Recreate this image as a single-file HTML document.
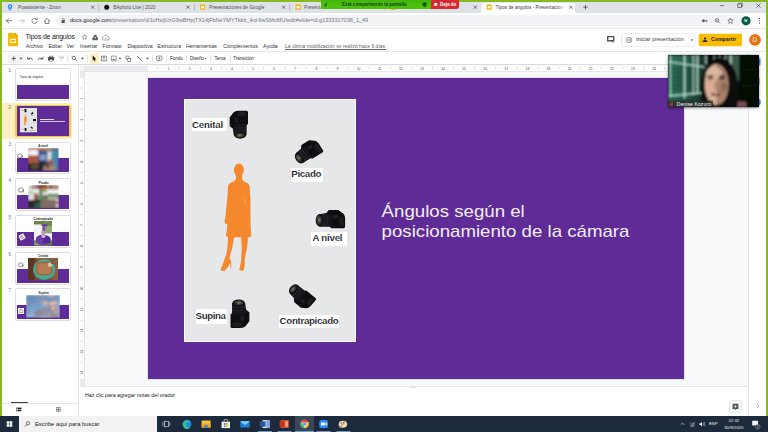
<!DOCTYPE html>
<html><head><meta charset="utf-8">
<style>
*{box-sizing:border-box;margin:0;padding:0}
html,body{width:768px;height:432px;overflow:hidden;background:#fff;font-family:"Liberation Sans",sans-serif}
.a{position:absolute}
.t{position:absolute;white-space:nowrap;line-height:1}
#tabstrip{left:0;top:0;width:768px;height:13.3px;background:#dee1e6}
#addr{left:0;top:13.3px;width:768px;height:15.7px;background:#fff;border-bottom:.5px solid #e4e6e9}
#omni{left:56.3px;top:15px;width:686px;height:11.4px;border-radius:6px;background:#f1f3f4}
#hdr{left:0;top:29px;width:768px;height:22.3px;background:#fff}
#tb{left:0;top:51.3px;width:768px;height:14px;background:#fff;border-top:.6px solid #e3e5e8;border-bottom:.6px solid #dadce0}
#film{left:0;top:65.3px;width:79.2px;height:351px;background:#fff;border-right:.6px solid #e0e2e5}
#canvas{left:79.5px;top:65.3px;width:669px;height:320.5px;background:#f8f9fa}
#notes{left:79.5px;top:385.8px;width:669px;height:30.5px;background:#fff;border-top:.7px solid #e3e5e8}
#side{left:748.3px;top:51.6px;width:18px;height:365px;background:#fff;border-left:.6px solid #e3e5e8}
#slide{left:148px;top:77.5px;width:536px;height:301.5px;background:#5e2b97;box-shadow:0 0 1.5px rgba(0,0,0,.35)}
#pic{left:184px;top:98.6px;width:172.3px;height:243.4px;background:#e6e7e9;border:1px solid #fff}
.lbl{position:absolute;background:#fff;color:#101018;-webkit-text-stroke:.13px #fff;font-weight:bold;font-size:9.7px;line-height:1;white-space:nowrap}
#task{left:0;top:416px;width:768px;height:16px;background:#1c2a3b}
.g{position:absolute;background:#86ba1e}
.menu{top:43.8px;font-size:5.17px;color:#30333a}
.tbt{top:56.6px;font-size:4.5px;color:#26292c}
.sep{position:absolute;top:54.8px;width:.5px;height:7.4px;background:#e0e2e5}
.num{position:absolute;font-size:4.8px;color:#6f757b;line-height:1;left:8.6px}
.th{position:absolute;left:15px;width:55.6px;height:32.6px;border:.6px solid #dcdee2;border-radius:1.6px;background:#fff}
.ts{position:absolute;left:16.8px;width:52.7px;height:29.6px;background:#fff;overflow:hidden}
.tp{position:absolute;left:0;width:100%;bottom:0;background:#5e2b97}
.tt{position:absolute;font-size:3px;font-weight:bold;color:#222;line-height:1;white-space:nowrap;transform:translateX(-50%)}
</style></head><body>
<!-- chrome tab strip -->
<div class="a" id="tabstrip"></div>
<div class="a" id="addr"></div>
<div class="a" id="omni"></div>
<div class="a" id="hdr"></div>
<div class="a" id="tb"></div>
<div class="a" id="film"></div>
<div class="a" id="canvas"></div>
<div class="a" id="notes"></div>
<div class="a" id="side"></div>
<div class="a" id="slide"></div>
<div class="a" id="pic"></div>
<div class="a" id="task"></div>
<!--TABS-->
<!-- tabs -->
<svg class="a" style="left:0;top:0" width="768" height="14" viewBox="0 0 768 14">
<path d="M478.5,13.4 Q481.5,13.4 481.5,10.4 L481.5,5.6 Q481.5,2.8 484.3,2.8 L572.2,2.8 Q575,2.8 575,5.6 L575,10.4 Q575,13.4 578,13.4 Z" fill="#fff"/>
<g stroke="#8a9096" stroke-width=".5"><path d="M98.7,4.6V10.6M194.6,4.6V10.6M289.5,4.6V10.6M385.3,4.6V10.6"/></g>
<!-- favicons -->
<path d="M10,4.3a2.3,2.3 0 0 1 2.3,2.3c0,1.2-.9,1.6-1.1,2.6h-2.4c-.2-1-1.1-1.4-1.1-2.6A2.3,2.3 0 0 1 10,4.3z" fill="#2d8cff"/><rect x="9" y="9.6" width="2" height=".9" fill="#2d8cff"/><circle cx="10" cy="6.5" r=".9" fill="#cfe6ff"/>
<circle cx="106.7" cy="7.2" r="2.5" fill="#0a0a0a"/>
<g id="sl"><rect x="200" y="4.6" width="5.2" height="5.2" rx=".8" fill="#f4b400"/><rect x="201.1" y="6" width="3" height="2.4" fill="#fff"/></g>
<use href="#sl" x="95.6"/><use href="#sl" x="190.800"/><use href="#sl" x="286.6"/>
<!-- close x -->
<g stroke="#3c4043" stroke-width=".7" fill="none"><path d="M91.2,5.7l3,3m0,-3l-3,3M186.5,5.7l3,3m0,-3l-3,3M282.2,5.7l3,3m0,-3l-3,3M473.8,5.7l3,3m0,-3l-3,3M569.3,5.7l3,3m0,-3l-3,3"/>
<path d="M583.3,7.2h4.4M585.5,5v4.4" stroke="#44484d" stroke-width=".8"/>
<path d="M719.8,5.6h4.4" stroke="#333" stroke-width=".6"/><rect x="737.8" y="4" width="3.6" height="3.6" stroke="#333" stroke-width=".6"/><path d="M738.8,4V3.2h3.6V6.6h-1" stroke="#333" stroke-width=".5"/>
<path d="M756.4,3.4l4.2,4.2m0,-4.2l-4.2,4.2" stroke="#333" stroke-width=".6"/></g>
</svg>
<div class="t" style="left:18px;top:5.5px;font-size:4.7px;color:#4a4e54">Posasistente - Zoom</div>
<div class="t" style="left:113.3px;top:5.5px;font-size:4.7px;color:#4a4e54">BAphoto Live | 2020</div>
<div class="t" style="left:209px;top:5.5px;font-size:4.7px;color:#4a4e54">Presentaciones de Google</div>
<div class="t" style="left:304px;top:5.5px;font-size:4.7px;color:#4a4e54">Presenta</div>
<div class="a" style="left:494.8px;top:3px;width:70.5px;height:10px;overflow:hidden"><div class="t" style="left:1px;top:2.5px;font-size:4.7px;color:#35383d">Tipos de ángulos - Presentaciones</div></div>
<div class="a" style="left:558px;top:3.5px;width:8px;height:8px;background:linear-gradient(90deg,rgba(255,255,255,0),#fff 85%)"></div>
<!--/TABS-->

<!--ADDR-->
<svg class="a" style="left:0;top:13px" width="768" height="16" viewBox="0 13 768 16">
<g stroke="#50545a" stroke-width=".75" fill="none" stroke-linecap="round" stroke-linejoin="round">
<path d="M11.6,20.8H6.6M8.8,18.5L6.5,20.8L8.8,23.1"/>
<path d="M19.2,20.8H24.2M22,18.5L24.3,20.8L22,23.1" stroke="#b6b9be"/>
<path d="M36.6,19.2A2.6,2.6 0 1 0 37.1,21.6"/><path d="M37.2,17.9V19.5H35.6" stroke-width=".65"/>
<path d="M44.3,21L47,18.4L49.7,21M45,20.6V23.4H49V20.6"/>
</g>
<rect x="61.6" y="20.2" width="3.2" height="2.8" rx=".4" fill="#4c5055"/><path d="M62.2,20.4V19.4a1,1 0 0 1 2,0V20.4" stroke="#4c5055" stroke-width=".55" fill="none"/>
<!-- right icons -->
<g stroke="#50545a" stroke-width=".65" fill="none"><circle cx="703.4" cy="20.8" r="1.15" fill="#50545a"/><path d="M704.4,20.8H707.6M706.6,20.8V22" stroke-width=".8"/>
<circle cx="717" cy="20.3" r="1.8"/><path d="M718.3,21.7L720,23.4M716,20.3h2" />
<path d="M730.5,18.2l.8,1.8l1.9,.2l-1.4,1.3l.4,1.9l-1.7,-1l-1.7,1l.4,-1.9l-1.4,-1.3l1.9,-.2z" stroke-linejoin="round"/></g>
<circle cx="746" cy="20.8" r="4.6" fill="#0b5a44"/>
<g fill="#50545a"><circle cx="759.5" cy="18.4" r=".6"/><circle cx="759.5" cy="20.8" r=".6"/><circle cx="759.5" cy="23.2" r=".6"/></g>
</svg>
<div class="t" style="left:744.3px;top:18.8px;font-size:4px;font-weight:bold;color:#fff">N</div>
<div class="t" style="left:70px;top:18.1px;font-size:5.52px;color:#73777c"><span style="color:#202124">docs.google.com</span>/presentation/d/1cHsijUzG9wBHpjTX14jFbNeYMYTkkb_ikd-6wSMx8fU/edit#slide=id.g1333317038_1_49</div>
<!--/ADDR-->

<!--HDR-->
<svg class="a" style="left:0;top:28px" width="768" height="38" viewBox="0 28 768 38">
<!-- slides logo -->
<path d="M9,33H15.2L18,35.8V45.4Q18,46.3 17.1,46.3H9Q8.1,46.3 8.1,45.4V33.9Q8.1,33 9,33Z" fill="#f4b400"/><path d="M15.2,33L18,35.8H15.2Z" fill="#d99b00"/>
<rect x="10.2" y="38.8" width="5.7" height="4.2" fill="#fff"/><rect x="11.1" y="39.9" width="3.9" height="2" fill="#f4b400"/>
<!-- star, drive, cloud -->
<g transform="translate(0 -1.6)" stroke="#5f6368" stroke-width=".55" fill="none" stroke-linejoin="round"><path d="M84.5,36l.8,1.7l1.8,.2l-1.3,1.3l.3,1.8l-1.6,-.9l-1.6,.9l.3,-1.8l-1.3,-1.3l1.8,-.2z"/>
<path d="M94.4,36.4h1.7l2.3,4l-.9,1.5h-4.6l-.9,-1.5z" fill="#5f6368" stroke="none"/><path d="M95.2,38.2l.9,1.6h-1.8z" fill="#fff" stroke="none"/>
<path d="M103.6,41.6h4.2a1.5,1.5 0 0 0 .2,-3a2.2,2.2 0 0 0 -4.2,-.5a1.8,1.8 0 0 0 -.2,3.5z"/><path d="M105,39.6l.7,.7l1.2,-1.3" stroke-width=".45"/></g>
<!-- comment icon -->
<path d="M607,35.900h7.400v5.500h-1.100v1.700l-1.700,-1.700h-4.600z" fill="#50545a"/><rect x="608.400" y="37.300" width="4.600" height="2.700" fill="#fff"/>
<!-- present button -->
<rect x="621.5" y="33.6" width="73.8" height="12.9" rx="1.6" fill="#fff" stroke="#dadce0" stroke-width=".5"/><path d="M688.3,33.6V46.5" stroke="#dadce0" stroke-width=".5"/>
<rect x="626.8" y="37.7" width="4.4" height="4.6" rx=".5" fill="none" stroke="#3c4043" stroke-width=".6"/><path d="M628,40h2.2M629.4,39.2l.9,.8l-.9,.8" stroke="#3c4043" stroke-width=".5" fill="none"/>
<path d="M690.6,39.5h2.6l-1.3,1.5z" fill="#3c4043"/>
<!-- share button -->
<rect x="698.7" y="33.8" width="43.3" height="12.4" rx="1.6" fill="#fbbc04"/>
<circle cx="705" cy="38.6" r="1.1" fill="#202124"/><path d="M702.6,42v-.5q0,-1.5 2.4,-1.5q2.4,0 2.4,1.500v.5z" fill="#202124"/>
<circle cx="755" cy="39.9" r="5.9" fill="#e8710a"/>
<!-- toolbar -->
<rect x="8.300" y="53.800" width="16.400" height="9.800" rx="1" fill="#f1f3f4"/><rect x="89.7" y="53.2" width="9.4" height="10.8" rx="1" fill="#feefc3"/>
<g stroke="#3c4043" stroke-width=".75" fill="none">
<path d="M11.6,58.5h4.4M13.8,56.3v4.400"/>
<path d="M28.300,58.700q2.400,-2 4.600,.9M27.700,56.800v2.300h2.300" stroke-width=".8"/>
<path d="M42.300,58.700q-2.400,-2 -4.600,.9M42.900,56.800v2.300h-2.300" stroke-width=".8"/>
<rect x="49.600" y="56.100" width="3.200" height="1.600" stroke-width=".5"/><rect x="48.600" y="57.700" width="5.200" height="2.400" fill="#3c4043"/><rect x="49.800" y="59.400" width="2.800" height="1.800" fill="#fff" stroke-width=".4"/>
<path d="M59.200,56.200h3.600v1.400h-3.600zM62.800,56.900h.8v1.500h-2.600v2.800" stroke="#bdc1c6" stroke-width=".6"/>
<circle cx="73.800" cy="57.900" r="1.700"/><path d="M75.100,59.200l1.700,1.700"/>
<rect x="101.600" y="56.100" width="4.600" height="4.800" stroke-width=".55"/><path d="M102.800,57.400h2.200M103.900,57.400v2.500" stroke-width=".55"/>
<rect x="111.400" y="56.100" width="4.800" height="4.800" rx=".5" stroke-width=".55"/><path d="M112.200,59.800l1.100,-1.300l.8,.9l.6,-.6l.9,1z" fill="#3c4043" stroke="none"/>
<circle cx="127.400" cy="57.700" r="1.800" stroke-width=".55"/><rect x="127.800" y="58.300" width="3" height="3" fill="#fff" stroke-width=".55"/>
<path d="M137.400,56.200l4.600,4.600" stroke-width=".9"/>
<rect x="156.600" y="56.100" width="5.300" height="4.200" rx=".5" stroke-width=".55"/><path d="M158,58.200h2.500M159.250,57v2.400" stroke-width=".5"/><path d="M158.500,60.300v1.100l1.100,-1.100" stroke-width=".45"/>
</g>
<path d="M92.700,55.600v5l1.200,-1.100l.9,2l.8,-.35l-.9,-1.950h1.600z" fill="#111"/>
<g fill="#3c4043"><path d="M19.600,57.700h2.800l-1.400,1.700z"/><path d="M81.100,57.700h2.800l-1.400,1.700z"/><path d="M118.600,57.700h2.800l-1.400,1.700z"/><path d="M146.100,57.700h2.800l-1.400,1.700z"/><path d="M204.300,58.200h2.200l-1.100,1.300z"/></g>
</svg>
<div class="sep" style="left:67.4px"></div><div class="sep" style="left:87.4px"></div><div class="sep" style="left:152.400px"></div><div class="sep" style="left:165.600px"></div><div class="sep" style="left:186px"></div><div class="sep" style="left:210px"></div><div class="sep" style="left:229.500px"></div>
<div class="t" style="left:25.600px;top:33.500px;font-size:6.950px;color:#202124;letter-spacing:-.22px">Tipos de ángulos</div>
<div class="t menu" style="left:25.800px">Archivo</div><div class="t menu" style="left:48.400px">Editar</div><div class="t menu" style="left:66.600px">Ver</div><div class="t menu" style="left:80px">Insertar</div><div class="t menu" style="left:102.500px">Formato</div><div class="t menu" style="left:127.400px">Diapositiva</div><div class="t menu" style="left:157.500px">Estructura</div><div class="t menu" style="left:186px">Herramientas</div><div class="t menu" style="left:223.200px">Complementos</div><div class="t menu" style="left:263.100px">Ayuda</div>
<div class="t" style="left:285px;top:43.900px;font-size:5.040px;color:#5f6368;text-decoration:underline;text-decoration-thickness:.4px;text-underline-offset:.7px">La última modificación se realizó hace 6 días.</div>
<div class="t tbt" style="left:170px">Fondo</div><div class="t tbt" style="left:190px">Diseño</div><div class="t tbt" style="left:214.500px">Tema</div><div class="t tbt" style="left:233.250px">Transición</div>
<div class="t" style="left:635.900px;top:37.300px;font-size:5.530px;color:#3c4043">Iniciar presentación</div>
<div class="t" style="left:710.900px;top:37.400px;font-size:5.250px;font-weight:bold;color:#202124">Compartir</div>
<div class="t" style="left:752.600px;top:37.300px;font-size:6.400px;color:#fff">D</div>
<!--/HDR-->

<!--TB-->
<!--RULERS-->
<div class="a" style="left:84.3px;top:65.8px;width:664px;height:5.1px;background:#e8eaed"></div>
<div class="a" style="left:148px;top:65.8px;width:536px;height:5.1px;background:#fff"></div>
<div class="a" style="left:79.5px;top:65.8px;width:4.7px;height:320px;background:#e8eaed"></div>
<div class="a" style="left:79.5px;top:77.5px;width:4.7px;height:301.5px;background:#fff"></div>
<div class="a" style="left:79.5px;top:65.8px;width:4.7px;height:5.1px;background:#f1f3f4"></div>
<div class="a" style="left:84.2px;top:65.8px;width:.5px;height:320px;background:#e3e5e8"></div>
<div class="a" style="left:84.3px;top:70.9px;width:664px;height:.4px;background:#e6e8eb"></div>
<svg class="a" style="left:0;top:62px" width="768" height="326" viewBox="0 62 768 326"><g font-family="Liberation Sans, sans-serif" font-size="3.3" fill="#3c4043" text-anchor="middle"><text x="168.7" y="69.55">1</text><text x="189.8" y="69.55">2</text><text x="210.9" y="69.55">3</text><text x="232.0" y="69.55">4</text><text x="253.1" y="69.55">5</text><text x="274.2" y="69.55">6</text><text x="295.3" y="69.55">7</text><text x="316.4" y="69.55">8</text><text x="337.5" y="69.55">9</text><text x="358.6" y="69.55">10</text><text x="379.7" y="69.55">11</text><text x="400.8" y="69.55">12</text><text x="421.9" y="69.55">13</text><text x="443.0" y="69.55">14</text><text x="464.1" y="69.55">15</text><text x="485.2" y="69.55">16</text><text x="506.3" y="69.55">17</text><text x="527.4" y="69.55">18</text><text x="548.5" y="69.55">19</text><text x="569.6" y="69.55">20</text><text x="590.7" y="69.55">21</text><text x="611.8" y="69.55">22</text><text x="632.9" y="69.55">23</text><text x="654.0" y="69.55">24</text><text x="675.1" y="69.55">25</text><text transform="translate(83.05 98.5) rotate(-90)">1</text><text transform="translate(83.05 119.6) rotate(-90)">2</text><text transform="translate(83.05 140.7) rotate(-90)">3</text><text transform="translate(83.05 161.8) rotate(-90)">4</text><text transform="translate(83.05 182.9) rotate(-90)">5</text><text transform="translate(83.05 204.0) rotate(-90)">6</text><text transform="translate(83.05 225.1) rotate(-90)">7</text><text transform="translate(83.05 246.2) rotate(-90)">8</text><text transform="translate(83.05 267.3) rotate(-90)">9</text><text transform="translate(83.05 288.4) rotate(-90)">10</text><text transform="translate(83.05 309.5) rotate(-90)">11</text><text transform="translate(83.05 330.6) rotate(-90)">12</text><text transform="translate(83.05 351.7) rotate(-90)">13</text><text transform="translate(83.05 372.8) rotate(-90)">14</text></g><g stroke="#9aa0a6" stroke-width=".4"><path d="M158.2,66.9v2.9M179.2,66.9v2.9M200.3,66.9v2.9M221.4,66.9v2.9M242.6,66.9v2.9M263.6,66.9v2.9M284.8,66.9v2.9M305.9,66.9v2.9M327.0,66.9v2.9M348.1,66.9v2.9M369.1,66.9v2.9M390.2,66.9v2.9M411.4,66.9v2.9M432.5,66.9v2.9M453.6,66.9v2.9M474.6,66.9v2.9M495.8,66.9v2.9M516.9,66.9v2.9M538.0,66.9v2.9M559.1,66.9v2.9M580.1,66.9v2.9M601.2,66.9v2.9M622.4,66.9v2.9M643.5,66.9v2.9M664.6,66.9v2.9M80.5,88.0h2.7M80.5,109.1h2.7M80.5,130.2h2.7M80.5,151.2h2.7M80.5,172.4h2.7M80.5,193.5h2.7M80.5,214.6h2.7M80.5,235.7h2.7M80.5,256.8h2.7M80.5,277.9h2.7M80.5,299.0h2.7M80.5,320.1h2.7M80.5,341.1h2.7M80.5,362.2h2.7"/></g><g stroke="#c4c7cc" stroke-width=".45"><path d="M152.9,67.9v.9M163.4,67.9v.9M174.0,67.9v.9M184.5,67.9v.9M195.1,67.9v.9M205.6,67.9v.9M216.2,67.9v.9M226.7,67.9v.9M237.3,67.9v.9M247.8,67.9v.9M258.4,67.9v.9M268.9,67.9v.9M279.5,67.9v.9M290.0,67.9v.9M300.6,67.9v.9M311.1,67.9v.9M321.7,67.9v.9M332.2,67.9v.9M342.8,67.9v.9M353.3,67.9v.9M363.9,67.9v.9M374.4,67.9v.9M385.0,67.9v.9M395.5,67.9v.9M406.1,67.9v.9M416.6,67.9v.9M427.2,67.9v.9M437.7,67.9v.9M448.3,67.9v.9M458.8,67.9v.9M469.4,67.9v.9M479.9,67.9v.9M490.5,67.9v.9M501.0,67.9v.9M511.6,67.9v.9M522.1,67.9v.9M532.7,67.9v.9M543.2,67.9v.9M553.8,67.9v.9M564.3,67.9v.9M574.9,67.9v.9M585.4,67.9v.9M596.0,67.9v.9M606.5,67.9v.9M617.1,67.9v.9M627.6,67.9v.9M638.2,67.9v.9M648.7,67.9v.9M659.3,67.9v.9M669.8,67.9v.9M680.4,67.9v.9M81.4,82.7h.9M81.4,93.2h.9M81.4,103.8h.9M81.4,114.3h.9M81.4,124.9h.9M81.4,135.4h.9M81.4,146.0h.9M81.4,156.5h.9M81.4,167.1h.9M81.4,177.6h.9M81.4,188.2h.9M81.4,198.7h.9M81.4,209.3h.9M81.4,219.8h.9M81.4,230.4h.9M81.4,240.9h.9M81.4,251.5h.9M81.4,262.0h.9M81.4,272.6h.9M81.4,283.1h.9M81.4,293.7h.9M81.4,304.2h.9M81.4,314.8h.9M81.4,325.3h.9M81.4,335.9h.9M81.4,346.4h.9M81.4,357.0h.9M81.4,367.5h.9M81.4,378.1h.9"/></g></svg>
<!--/RULERS-->
<!--FILM-->
<div class="a" style="left:2px;top:103.4px;width:70.3px;height:35.2px;background:#feefc3;border-radius:0 1.5px 1.5px 0"></div>
<div class="num" style="top:69.3px">1</div>
<div class="th" style="top:68.4px"></div>
<div class="ts" id="ts1" style="top:69.7px"><div class="tp" style="height:14.3px"></div><div class="a" style="left:3px;top:6.200px;font-size:2.900px;line-height:1;color:#222;white-space:nowrap;letter-spacing:.1px">Tipos de ángulos</div></div>
<div class="num" style="top:105.9px">2</div>
<div class="a" style="left:14.9px;top:104.9px;width:55.8px;height:32.6px;border-radius:2px;background:#f9bf2c;opacity:.85"></div>
<div class="ts" id="ts2" style="top:106.3px"><div class="a" style="left:0;top:0;width:100%;height:100%;background:#5e2b97"></div><svg class="a" style="left:3.200px;top:2.200px" width="17.200" height="24.300" viewBox="184 98 173 244"><rect x="184" y="98" width="173" height="244" fill="#e4e5e7"/><g fill="#f5872d"><ellipse cx="238.900" cy="170" rx="6" ry="7"/><path d="M228,183h22l1,54h-25zM228,237h7l-4,32l-10,2zM241,237h7l-3,33h-6z"/></g><g fill="#111"><rect x="229" y="109" width="20" height="31" rx="3"/><path d="M293,152l18,-13l11,12l-19,14z"/><rect x="315" y="209" width="30" height="20" rx="3"/><path d="M288,288l9,-5l18,14l-8,12z"/><rect x="230" y="299" width="19" height="30" rx="3"/></g><g fill="#fff"><rect x="192" y="118" width="34" height="13"/><rect x="291" y="168" width="32" height="14"/><rect x="311" y="232" width="36" height="14"/><rect x="279" y="314" width="60" height="13"/><rect x="196" y="309" width="31" height="15"/></g><g fill="#666"><rect x="194" y="122" width="30" height="5"/><rect x="293" y="172" width="28" height="5"/><rect x="313" y="236" width="31" height="5"/><rect x="281" y="318" width="56" height="5"/><rect x="198" y="313" width="27" height="5"/></g></svg><div class="a" style="left:23px;top:12.700px;width:14.600px;height:.9px;background:#fff;opacity:.85"></div><div class="a" style="left:23px;top:15.100px;width:25px;height:.9px;background:#fff;opacity:.75"></div></div>
<div class="num" style="top:142.5px">3</div>
<div class="th" style="top:141.6px"></div>
<div class="ts" id="ts3" style="top:142.9px"><div class="tp" style="height:14px"></div><svg class="a" style="left:11.4px;top:5.3px" width="30.8" height="22.8" viewBox="0 0 100 100" preserveAspectRatio="none"><defs><filter id="b11453" x="-5%" y="-5%" width="110%" height="110%"><feGaussianBlur stdDeviation="2.86 3.85"/></filter><clipPath id="c11453"><rect width="100" height="100"/></clipPath></defs><g clip-path="url(#c11453)"><g filter="url(#b11453)"><rect x="0" y="0" width="100" height="100" fill="#6a4a3a"/><rect x="0" y="0" width="36" height="70" fill="#a8583c"/><rect x="2" y="8" width="32" height="24" fill="#f4f6ff"/><rect x="30" y="0" width="45" height="12" fill="#c06a44"/><rect x="33" y="12" width="30" height="60" fill="#40588a"/><rect x="38" y="30" width="20" height="25" fill="#8aa0d0"/><rect x="36" y="55" width="24" height="30" fill="#2a3048"/><rect x="60" y="8" width="36" height="70" fill="#5a8aa0"/><rect x="64" y="15" width="12" height="40" fill="#d8e0e0"/><rect x="78" y="20" width="12" height="45" fill="#3a90a8"/><rect x="70" y="50" width="10" height="25" fill="#b04838"/><rect x="93" y="0" width="7" height="100" fill="#3a78b4"/><rect x="0" y="68" width="55" height="32" fill="#2a241e"/><rect x="10" y="75" width="25" height="15" fill="#5a5a40"/><rect x="50" y="78" width="42" height="22" fill="#9a8c74"/><rect x="60" y="62" width="8" height="28" fill="#7a2c2c"/></g></g></svg><div class="tt" style="left:26.300px;top:1.75px">A nivel</div><svg class="a" style="left:0.2px;top:9.8px" width="6" height="5.6" viewBox="0 0 10 10"><path d="M1,3.5Q1,2.500 2.200,2.500H3L3.800,1.400H6.200L7,2.500H7.600Q8.600,2.500 8.600,3.500V7.500Q8.600,8.500 7.600,8.500H2.200Q1,8.500 1,7.500Z" fill="none" stroke="#333" stroke-width=".9"/><circle cx="8.800" cy="6.500" r="1.1" fill="none" stroke="#333" stroke-width=".7"/></svg></div>
<div class="num" style="top:179.3px">4</div>
<div class="th" style="top:178.4px"></div>
<div class="ts" id="ts4" style="top:179.7px"><div class="tp" style="height:14.100px"></div><svg class="a" style="left:10.9px;top:5.4px" width="31" height="23.3" viewBox="0 0 100 100" preserveAspectRatio="none"><defs><filter id="b10954" x="-5%" y="-5%" width="110%" height="110%"><feGaussianBlur stdDeviation="2.83 3.78"/></filter><clipPath id="c10954"><rect width="100" height="100"/></clipPath></defs><g clip-path="url(#c10954)"><g filter="url(#b10954)"><rect x="0" y="0" width="100" height="100" fill="#7a6c5e"/><rect x="0" y="0" width="100" height="16" fill="#8c2830"/><rect x="0" y="0" width="12" height="14" fill="#f0e8e8"/><rect x="18" y="2" width="6" height="10" fill="#e8e0e0"/><rect x="27" y="2" width="6" height="10" fill="#3a70c0"/><rect x="62" y="2" width="7" height="10" fill="#e8c030"/><rect x="72" y="2" width="6" height="10" fill="#4a80c8"/><rect x="80" y="2" width="8" height="10" fill="#e0c840"/><rect x="92" y="2" width="8" height="10" fill="#d0d8e0"/><rect x="0" y="16" width="36" height="30" fill="#ececec"/><rect x="58" y="18" width="42" height="24" fill="#f0f2f2"/><rect x="36" y="18" width="24" height="22" fill="#4a8a58"/><rect x="44" y="14" width="16" height="10" fill="#d8a040"/><rect x="0" y="28" width="18" height="8" fill="#8ac070"/><rect x="60" y="38" width="40" height="18" fill="#4f8f5c"/><rect x="46" y="30" width="18" height="12" fill="#e8e8e8"/><rect x="0" y="46" width="20" height="20" fill="#e0e0e0"/><rect x="20" y="36" width="12" height="30" fill="#a04a30"/><rect x="32" y="48" width="18" height="16" fill="#3aa070"/><rect x="0" y="64" width="42" height="36" fill="#2c2a24"/><rect x="22" y="78" width="20" height="18" fill="#1c6a5c"/><rect x="40" y="56" width="50" height="44" fill="#7c6e60"/><rect x="64" y="50" width="30" height="14" fill="#b8b4ac"/><rect x="90" y="60" width="10" height="36" fill="#d8d0d0"/><rect x="92" y="70" width="8" height="12" fill="#b03030"/></g></g></svg><div class="tt" style="left:26.800px;top:2.25px">Picado</div><svg class="a" style="left:1.1px;top:7.8px" width="6.2" height="5.8" viewBox="0 0 10 10"><path d="M1,3.5Q1,2.500 2.200,2.500H3L3.800,1.400H6.200L7,2.500H7.600Q8.600,2.500 8.600,3.500V7.500Q8.600,8.500 7.600,8.500H2.200Q1,8.500 1,7.500Z" fill="none" stroke="#333" stroke-width=".9"/><circle cx="8.800" cy="6.500" r="1.1" fill="none" stroke="#333" stroke-width=".7"/></svg></div>
<div class="num" style="top:215.9px">5</div>
<div class="th" style="top:215.0px"></div>
<div class="ts" id="ts5" style="top:216.3px"><div class="tp" style="height:14px"></div><svg class="a" style="left:17.2px;top:4.9px" width="18.1" height="24.4" viewBox="0 0 100 100" preserveAspectRatio="none"><defs><filter id="b17249" x="-5%" y="-5%" width="110%" height="110%"><feGaussianBlur stdDeviation="4.32 3.20"/></filter><clipPath id="c17249"><rect width="100" height="100"/></clipPath></defs><g clip-path="url(#c17249)"><g filter="url(#b17249)"><rect x="0" y="0" width="100" height="100" fill="#f2f3f2"/><rect x="0" y="0" width="100" height="14" fill="#6c8448"/><rect x="55" y="0" width="45" height="50" fill="#708a50"/><rect x="62" y="20" width="38" height="30" fill="#9ab080" opacity="0.8"/><rect x="0" y="80" width="100" height="20" fill="#5c7a38"/><rect x="0" y="88" width="30" height="12" fill="#88a060"/><ellipse cx="58" cy="17" rx="18" ry="5" fill="#6a38a8"/><rect x="46" y="22" width="14" height="40" fill="#7a48a0"/><rect x="40" y="40" width="20" height="14" fill="#c8a0b8"/><ellipse cx="50" cy="76" rx="40" ry="20" fill="#5a2c9c"/><ellipse cx="30" cy="80" rx="20" ry="14" fill="#6a3cac"/><ellipse cx="72" cy="78" rx="20" ry="15" fill="#5428a0"/><ellipse cx="52" cy="62" rx="12" ry="8" fill="#d8b8c0"/></g></g></svg><div class="tt" style="left:26.400px;top:1.95px">Contrapicado</div><svg class="a" style="left:.8px;top:16.800px" width="8" height="8" viewBox="0 0 8 8"><g transform="rotate(-28 4 4)"><rect x="1.300" y="1.300" width="5.400" height="5.400" fill="#fff"/><path d="M2.200,3l1.200,2.200M3.600,2.400l1.600,2.800M5,2.400l-2.400,1.800M2.600,5.400h2.800" stroke="#555" stroke-width=".45" fill="none"/></g></svg></div>
<div class="num" style="top:252.9px">6</div>
<div class="th" style="top:252.0px"></div>
<div class="ts" id="ts6" style="top:253.3px"><div class="tp" style="height:14.100px"></div><svg class="a" style="left:11.2px;top:5px" width="30" height="22.4" viewBox="0 0 100 100" preserveAspectRatio="none"><defs><filter id="b11250" x="-5%" y="-5%" width="110%" height="110%"><feGaussianBlur stdDeviation="2.60 3.50"/></filter><clipPath id="c11250"><rect width="100" height="100"/></clipPath></defs><g clip-path="url(#c11250)"><g filter="url(#b11250)"><rect x="0" y="0" width="100" height="100" fill="#7c4a2c"/><rect x="0" y="0" width="22" height="100" fill="#5c3420"/><rect x="80" y="0" width="20" height="100" fill="#8c5c3c"/><rect x="30" y="0" width="50" height="10" fill="#93603c"/><ellipse cx="54" cy="52" rx="37" ry="46" fill="#3fa894"/><ellipse cx="54" cy="52" rx="33" ry="41" fill="#45b09a" opacity="0.6"/><rect x="26" y="17" width="55" height="60" rx="16" fill="#a0643c"/><rect x="31" y="23" width="45" height="48" rx="12" fill="#b47c54"/><ellipse cx="74" cy="30" rx="8" ry="10" fill="#d8cc9c"/><ellipse cx="80" cy="24" rx="3" ry="4" fill="#6a3a28"/></g></g></svg><div class="tt" style="left:26.300px;top:1.65px">Cenital</div><svg class="a" style="left:1.2px;top:8.6px" width="5.6" height="5.4" viewBox="0 0 10 10"><path d="M1,3.5Q1,2.500 2.200,2.500H3L3.800,1.400H6.200L7,2.500H7.600Q8.600,2.500 8.600,3.500V7.500Q8.600,8.500 7.600,8.500H2.200Q1,8.500 1,7.500Z" fill="none" stroke="#333" stroke-width=".9"/><circle cx="8.800" cy="6.500" r="1.1" fill="none" stroke="#333" stroke-width=".7"/></svg></div>
<div class="num" style="top:289.2px">7</div>
<div class="th" style="top:288.3px"></div>
<div class="ts" id="ts7" style="top:289.6px"><div class="tp" style="height:13.900px"></div><svg class="a" style="left:9.3px;top:5.6px" width="34" height="22.7" viewBox="0 0 100 100" preserveAspectRatio="none"><defs><filter id="b9356" x="-5%" y="-5%" width="110%" height="110%"><feGaussianBlur stdDeviation="2.87 4.30"/></filter><clipPath id="c9356"><rect width="100" height="100"/></clipPath></defs><g clip-path="url(#c9356)"><g filter="url(#b9356)"><defs><linearGradient id="sky" x1="0" y1="0" x2=".3" y2="1"><stop offset="0" stop-color="#5c82b4"/><stop offset=".6" stop-color="#7ea4cc"/><stop offset="1" stop-color="#9cc0dc"/></linearGradient></defs><rect x="0" y="0" width="100" height="100" fill="url(#sky)"/><ellipse cx="45" cy="18" rx="18" ry="10" fill="#8a94ac" opacity="0.8"/><ellipse cx="12" cy="32" rx="9" ry="10" fill="#7c8aa8" opacity="0.7"/><ellipse cx="10" cy="76" rx="7" ry="6" fill="#8090ac" opacity="0.7"/><ellipse cx="75" cy="5" rx="8" ry="6" fill="#e0b0a0" opacity="0.8"/><ellipse cx="60" cy="82" rx="38" ry="26" fill="#8c8c9e"/><ellipse cx="50" cy="90" rx="28" ry="14" fill="#9a9aac"/><ellipse cx="75" cy="62" rx="18" ry="16" fill="#9490a4"/><ellipse cx="38" cy="80" rx="12" ry="10" fill="#8488a0"/><ellipse cx="57" cy="36" rx="6" ry="9" fill="#f0b494"/><ellipse cx="78" cy="38" rx="10" ry="8" fill="#f2b890"/><ellipse cx="86" cy="30" rx="4" ry="5" fill="#f0b898"/><ellipse cx="80" cy="58" rx="5" ry="7" fill="#f4bc98"/><ellipse cx="88" cy="76" rx="5" ry="6" fill="#f0b490"/><ellipse cx="92" cy="50" rx="4" ry="3" fill="#eeb090"/><ellipse cx="47" cy="28" rx="4" ry="4" fill="#d8a898" opacity="0.8"/></g></g></svg><div class="tt" style="left:26.800px;top:1.95px">Supina</div><svg class="a" style="left:1.100px;top:18.300px" width="6" height="6.100" viewBox="0 0 6 6"><rect width="6" height="6" fill="#fff"/><path d="M1.200,4.600V3Q1.200,2 2.200,1.800H3.800Q4.800,2 4.800,3V4.600ZM2.200,1.800Q3,1 3.800,1.800" stroke="#444" stroke-width=".45" fill="none"/></svg></div>
<div class="a" style="left:2px;top:402.6px;width:77px;height:.5px;background:#e3e5e8"></div>
<div class="a" style="left:11px;top:402px;width:17.3px;height:1.2px;background:#3c4043"></div>
<svg class="a" style="left:0;top:404px" width="80" height="12" viewBox="0 404 80 12"><g fill="#202124"><rect x="16.2" y="407.6" width="5.2" height="1.5"/><rect x="16.2" y="409.7" width="5.2" height="1.5"/><rect x="16.8" y="407.95" width=".9" height=".8" fill="#fff"/><rect x="16.8" y="410.05" width=".9" height=".8" fill="#fff"/></g><g fill="#3c4043"><rect x="56.2" y="407.2" width="1.1" height="1.1"/><rect x="57.8" y="407.2" width="1.1" height="1.1"/><rect x="59.4" y="407.2" width="1.1" height="1.1"/><rect x="56.2" y="408.8" width="1.1" height="1.1"/><rect x="57.8" y="408.8" width="1.1" height="1.1"/><rect x="59.4" y="408.8" width="1.1" height="1.1"/><rect x="56.2" y="410.4" width="1.1" height="1.1"/><rect x="57.8" y="410.4" width="1.1" height="1.1"/><rect x="59.4" y="410.4" width="1.1" height="1.1"/></g></svg>
<!--/FILM-->
<!--SLIDE-->
<svg class="a" style="left:184px;top:98px" width="174" height="245" viewBox="184 98 174 245">
<defs>
<radialGradient id="gl" cx=".45" cy=".45" r=".6"><stop offset="0" stop-color="#7d816a"/><stop offset=".5" stop-color="#3c3f36"/><stop offset="1" stop-color="#141416"/></radialGradient>
<g id="cam">
<path d="M-4,-6.2 L-1.5,-9.3 L8,-9.3 L10.4,-7.4 L13,-5.6 Q14.6,-3.6 14.8,-1 L14.8,7.6 Q14.8,9 13.2,9 L1,9 L-1,7.4 L-11,7.2 L-11,-5 Z" fill="#0e0e11"/>
<rect x="-11" y="-5.2" width="12.5" height="12.6" rx="1" fill="#15151a"/>
<rect x="-7.2" y="-5.2" width="1.1" height="12.6" fill="#2e2e34"/>
<rect x="-3.6" y="-5.2" width=".8" height="12.6" fill="#2a2a30"/>
<rect x="2.5" y="-4" width="5" height="3" fill="#26262c" opacity=".8"/>
<rect x="9" y="-2" width="4.5" height="9" rx="1.5" fill="#1c1c22"/>
<ellipse cx="-10.6" cy="1.1" rx="4" ry="6.2" fill="#111114"/>
<ellipse cx="-10.9" cy="1.1" rx="2.8" ry="4.7" fill="url(#gl)"/>
</g>
</defs>
<!-- silhouette -->
<g fill="#f5872d">
<ellipse cx="238.9" cy="170.1" rx="4.95" ry="6.5"/>
<path d="M236,173 L236,178.6 Q235.5,181 232.5,182 Q228.6,183 228,186.5 L227.6,195 L226.4,206.6 L225.3,217.7 L224.5,221 L225.4,224.2 L227.3,223.5 L227,229 L226,235.6 L226.6,237.1 L228.2,236.8 L227.6,244 L227.3,249 L226.2,255 L224.5,259.5 L222.6,265 L220.7,269.3 L221.4,271 L224.8,270.7 L228.2,266.6 L230.2,263 L230.6,268.3 L231.2,268.3 L231.2,261 L229.4,258 L231,252 L232.3,248 L233.4,241 L234.3,237.3 L241.2,237.3 L241.4,243 L241.8,249 L241.4,255 L241.3,259.5 L240.2,266 L239.3,269.6 L239.8,270.6 L243.6,270.4 L244.6,266 L244.8,259.5 L245.6,254 L246.9,249 L247.6,242 L247.9,237.3 L251,236.9 L251.3,234.8 L250.7,228 L250.5,217.7 L250.4,199.7 L249.7,187 Q249.4,183.4 245.6,182.2 Q242.4,181 242,178.6 L242,173 Z"/>
</g>
<path d="M244.7,197.5 L245.3,204.5" stroke="#e9b98e" stroke-width=".7" fill="none"/>
<!-- cameras -->
<use href="#cam" transform="translate(239,124.8) rotate(-90) scale(.95,1)"/>
<use href="#cam" transform="translate(307.3,151.8) rotate(-32) scale(.95)"/>
<use href="#cam" transform="translate(330.3,219.2)"/>
<use href="#cam" transform="translate(300.6,296.4) rotate(40) scale(.94,-.92)"/>
<use href="#cam" transform="translate(239.8,313.6) rotate(90) scale(.97,1.03)"/>
</svg>
<div class="lbl" style="left:192px;top:118px;width:34.5px;height:13.2px;padding:1.8px 0 0 .1px;letter-spacing:-.22px">Cenital</div>
<div class="lbl" style="left:291px;top:167.7px;width:32px;height:14.2px;padding:1.6px 0 0 .3px;letter-spacing:-.33px">Picado</div>
<div class="lbl" style="left:310.6px;top:232px;width:36.4px;height:13.8px;padding:1.4px 0 0 1.9px;letter-spacing:-.23px">A nivel</div>
<div class="lbl" style="left:279.4px;top:314.5px;width:59.6px;height:13.2px;padding:1.3px 0 0 .2px;letter-spacing:-.3px">Contrapicado</div>
<div class="lbl" style="left:195.5px;top:309px;width:31.3px;height:15px;padding:1.55px 0 0 .1px;letter-spacing:-.42px">Supina</div>
<svg class="a" style="left:370px;top:190px" width="280" height="60" viewBox="370 190 280 60">
<g fill="#f4effa" font-family="Liberation Sans, sans-serif" font-size="17.2">
<g transform="translate(381.6 0) scale(1.085 1)"><text x="0" y="217.1">Ángulos según el</text>
<text x="0" y="237.2">posicionamiento de la cámara</text></g>
</g></svg>
<!--/SLIDE-->
<!--NOTES-->
<div class="t" style="left:85px;top:393px;font-size:5.3px;color:#202124">Haz clic para agregar notas del orador</div>
<svg class="a" style="left:400px;top:384px" width="30" height="8" viewBox="400 384 30 8"><g fill="#9aa0a6"><circle cx="411.4" cy="387.4" r=".45"/><circle cx="413.2" cy="387.4" r=".45"/><circle cx="415" cy="387.4" r=".45"/></g></svg>
<div class="a" style="left:728.6px;top:400.4px;width:13.8px;height:13px;background:#f8f9fa;border:.5px solid #e3e5e8;border-radius:1.4px"></div>
<svg class="a" style="left:728px;top:400px" width="40" height="16" viewBox="728 400 40 16"><path d="M732.6,403.8h5.800v5.200h-2l-.9,1l-.9,-1h-2z" fill="#50545a"/><path d="M735.500,405l.5,1.100l1.100,.4l-1.100,.4l-.5,1.100l-.5,-1.100l-1.100,-.4l1.100,-.4z" fill="#fff"/><path d="M757.2,404.200l1.800,1.800l-1.800,1.800" stroke="#5f6368" stroke-width=".6" fill="none"/></svg>
<!--/NOTES-->

<!--VIDEO-->
<!-- side panel icons -->
<svg class="a" style="left:750px;top:55px" width="16" height="55" viewBox="750 55 16 55"><rect x="753.500" y="58.500" width="7" height="7" rx="1" fill="#4285f4"/><rect x="755" y="60.300" width="4" height="3.800" fill="#fff"/><path d="M754.500,78.200h5.600v6.800l-2.800,-1.400l-2.800,1.400z" fill="#fbbc04"/><circle cx="757.300" cy="102" r="3.500" fill="#4285f4"/><path d="M755.600,102l1.200,1.200l2.200,-2.400" stroke="#fff" stroke-width=".7" fill="none"/></svg>
<div class="a" style="left:667.600px;top:54.800px;width:91.200px;height:52.200px;background:#0a0d0b;box-shadow:0 .5px 2.500px rgba(0,0,0,.55);overflow:hidden;border-radius:.8px">
<svg width="91.200" height="52.200" viewBox="0 0 91.200 52.200" style="position:absolute;left:0;top:0">
<defs><filter id="vb" x="-10%" y="-10%" width="120%" height="120%"><feGaussianBlur stdDeviation="1"/></filter>
<linearGradient id="vg" x1="0" x2="1"><stop offset="0" stop-color="#2a7460"/><stop offset=".5" stop-color="#225846"/><stop offset="1" stop-color="#142a22"/></linearGradient></defs>
<rect width="91.200" height="52.200" fill="#060908"/>
<g filter="url(#vb)">
<rect x="0" y="0" width="40" height="52" fill="url(#vg)"/>
<g fill="#163a30" opacity=".55"><rect x="0" y="13" width="38" height="1.600"/><rect x="0" y="17" width="38" height="1.600"/><rect x="0" y="21" width="38" height="1.600"/><rect x="0" y="25" width="38" height="1.600"/><rect x="0" y="29" width="38" height="1.600"/><rect x="0" y="33" width="38" height="1.600"/><rect x="0" y="43" width="38" height="2"/><rect x="0" y="47" width="38" height="2"/></g>
<rect x="62" y="0" width="9" height="26" fill="#3b5a4b"/>
<rect x="58" y="0" width="5" height="14" fill="#2a4a3c"/>
<rect x="71" y="0" width="21" height="52" fill="#040706"/>
<rect x="74" y="14" width="14" height="1" fill="#14241c"/><rect x="74" y="30" width="14" height="1" fill="#14241c"/>
<g fill="#c4e8da" opacity=".92"><rect x="1.800" y="0" width="1.100" height="42"/><rect x="15.700" y="0" width="1.700" height="43"/><rect x="24.700" y="0" width="1.200" height="40"/><rect x="28.600" y="0" width="1.600" height="38"/><rect x="37.400" y="0" width="1.300" height="9"/><rect x="45.500" y="0" width="1.100" height="4.500"/><rect x="51" y="0" width="1.100" height="4"/><rect x="56.400" y="0" width="1.100" height="5"/><rect x="62" y="0" width="1.500" height="15"/>
<path d="M0,6l36.600,5.400v1.300l-36.600,-5.400z"/><path d="M0,40.400l34,-3.400v1.400l-34,3.400z"/></g>
<ellipse cx="51.500" cy="32" rx="18.500" ry="29.500" fill="#0d0a09"/>
<ellipse cx="62" cy="46" rx="11" ry="12" fill="#0f0c0b"/>
<rect x="33" y="40" width="14" height="13" fill="#120f0d"/>
<ellipse cx="48.700" cy="29.400" rx="12" ry="20.500" fill="#a98169"/>
<path d="M36.700,29.400a12,20.500 0 0 1 12,-20.500v41a12,20.500 0 0 1 -12,-20.500z" fill="#d2ad94"/>
<ellipse cx="46" cy="18" rx="8" ry="6" fill="#ddb9a2" opacity=".9"/>
<ellipse cx="41.500" cy="33" rx="3.800" ry="3.600" fill="#e3a99a"/>
<ellipse cx="56" cy="32" rx="3.400" ry="5" fill="#8f6a56"/>
<ellipse cx="42.500" cy="23.300" rx="3" ry="1" fill="#2e2018"/><ellipse cx="54" cy="23.600" rx="3" ry="1" fill="#2a1c16"/>
<ellipse cx="42.500" cy="20.800" rx="3.600" ry=".8" fill="#4a3428"/><ellipse cx="54.500" cy="21" rx="3.600" ry=".8" fill="#3a2a20"/>
<ellipse cx="47.800" cy="30.500" rx="1.800" ry="3.600" fill="#b48a72"/>
<ellipse cx="47.600" cy="39.300" rx="4.400" ry="1.700" fill="#6a3230"/><ellipse cx="47.600" cy="38.700" rx="2.600" ry=".7" fill="#d8c0b8"/>
<rect x="69.500" y="46.500" width="9" height="6" fill="#a06070" opacity=".75"/>
</g>
<rect x="0" y="45.600" width="45" height="6.600" fill="#2a2a2a" opacity=".72"/>
<path d="M3.400,46.600q.9,0 .9,.9v1.500q0,.9 -.9,.9q-.9,0 -.9,-.9v-1.500q0,-.9 .9,-.9zM1.800,49q0,1.600 1.600,1.600q1.600,0 1.600,-1.600M3.400,50.600v.9" stroke="#e8323c" stroke-width=".55" fill="none"/><path d="M1.400,51.200l4.200,-4.600" stroke="#e8323c" stroke-width=".6"/>
<text x="8.600" y="50.700" font-family="Liberation Sans, sans-serif" font-size="4.700" fill="#f4f4f4" textLength="34.500" lengthAdjust="spacingAndGlyphs">Denise Kozuro</text>
</svg></div>
<!--/VIDEO-->

<!--TASK-->
<div class="a" style="left:19.200px;top:416px;width:137.600px;height:16px;background:#f2f2f2"></div>
<div class="a" style="left:294.800px;top:416px;width:19.400px;height:16px;background:#3a4756"></div>
<div class="t" style="left:35px;top:422px;font-size:5.800px;color:#222">Escribe aquí para buscar</div>
<svg class="a" style="left:0;top:416px" width="768" height="16" viewBox="0 416 768 16">
<g fill="#fff"><rect x="6.700" y="421.200" width="2.600" height="2.600"/><rect x="9.700" y="421.200" width="2.600" height="2.600"/><rect x="6.700" y="424.200" width="2.600" height="2.600"/><rect x="9.700" y="424.200" width="2.600" height="2.600"/></g>
<circle cx="28" cy="423.300" r="1.700" fill="none" stroke="#222" stroke-width=".6"/><path d="M26.800,424.600l-2,2.100" stroke="#222" stroke-width=".7"/>
<!-- task view -->
<g transform="translate(166.4 424) scale(1.15) translate(-166.4 -424)"><g stroke="#e8eaed" stroke-width=".55" fill="none"><rect x="164.600" y="421.600" width="3.600" height="4.800"/><path d="M163.400,422.400v3.200M169.400,422.400v3.200"/></g></g>
<!-- edge -->
<g transform="translate(187 424) scale(1.28) translate(-187 -424)"><circle cx="187" cy="424" r="3.400" fill="#1b8fd8"/><path d="M184,425.500a3,3 0 0 0 5.500,1a2.400,2.400 0 0 1 -3.400,-2.600q.4,-1.400 2.400,-1.400q1.600,.2 1.800,1.700a3.400,3.400 0 0 0 -6.600,-.5z" fill="#35c1a0"/></g>
<!-- explorer -->
<g transform="translate(206.1 424) scale(1.28) translate(-206.1 -424)"><rect x="202.600" y="421.200" width="7" height="5.600" rx=".4" fill="#f6c443"/><rect x="202.600" y="423.600" width="7" height="3.200" fill="#e9a924"/><rect x="204.600" y="425" width="3" height="1.800" fill="#3a86d8"/></g>
<!-- store -->
<g transform="translate(225.8 424) scale(1.28) translate(-225.8 -424)"><rect x="222.500" y="422.200" width="6.600" height="5" fill="#f2f2f2"/><path d="M224.400,422.200v-.9q0,-.8 .8,-.8h1.200q.8,0 .8,.8v.9" stroke="#f2f2f2" stroke-width=".5" fill="none"/><rect x="224.300" y="423.300" width="1.300" height="1.300" fill="#e8452c"/><rect x="226" y="423.300" width="1.300" height="1.300" fill="#7fba00"/><rect x="224.300" y="425" width="1.300" height="1.300" fill="#00a4ef"/><rect x="226" y="425" width="1.300" height="1.300" fill="#ffb900"/></g>
<!-- mail -->
<g transform="translate(245 424.2) scale(1.28) translate(-245 -424.2)"><rect x="241.400" y="421.800" width="7.200" height="5" fill="#1e8ad6"/><path d="M241.400,422l3.600,2.800l3.600,-2.800v-.2h-7.200z" fill="#7fd0ff"/><path d="M241.400,426.800l2.800,-2.400M248.600,426.800l-2.800,-2.400" stroke="#0f62a8" stroke-width=".4"/></g>
<!-- word -->
<g transform="translate(264.8 424.1) scale(1.28) translate(-264.8 -424.1)"><rect x="263" y="421" width="5.600" height="6.200" fill="#e8eef8"/><rect x="261" y="422" width="4.400" height="4.200" fill="#2b579a"/><rect x="266" y="421" width="2.600" height="6.200" fill="#7aa2e0"/></g><rect x="258" y="431.200" width="14" height=".8" fill="#8ab4e8"/>
<!-- ppt -->
<g transform="translate(284.5 424) scale(1.28) translate(-284.5 -424)"><rect x="281.400" y="420.800" width="6.600" height="6.400" rx=".6" fill="#d24726"/><rect x="280.600" y="422" width="4" height="4" fill="#b83b1d"/><rect x="285" y="421.800" width="2.200" height="4.400" fill="#f0a088"/></g><rect x="277.600" y="431.200" width="14" height=".8" fill="#8ab4e8"/>
<!-- chrome -->
<g transform="translate(304.5 424) scale(1.28) translate(-304.5 -424)"><circle cx="304.500" cy="424" r="3.300" fill="#e8e8e8"/><path d="M304.500,424L301.640,422.350A3.300,3.300 0 0 1 307.360,422.350Z" fill="#ea4335"/><path d="M304.500,420.700a3.300,3.300 0 0 1 2.860,1.650h-2.860z" fill="#ea4335"/><path d="M307.360,422.350A3.300,3.300 0 0 1 304.500,427.300L306,424Z" fill="#fbbc04"/><path d="M304.500,427.300A3.300,3.300 0 0 1 301.640,422.350L304,425Z" fill="#34a853"/><circle cx="304.500" cy="424" r="1.500" fill="#fff"/><circle cx="304.500" cy="424" r="1.150" fill="#4285f4"/></g><rect x="294.800" y="431.200" width="19.400" height=".8" fill="#8ab4e8"/>
<!-- zoom -->
<g transform="translate(323.6 424) scale(1.28) translate(-323.6 -424)"><rect x="320.200" y="420.800" width="6.800" height="6.400" rx="1.700" fill="#2d8cff"/><rect x="321.600" y="422.800" width="3" height="2.400" rx=".4" fill="#fff"/><path d="M324.900,423.700l1.200,-.8v2.200l-1.200,-.8z" fill="#fff"/></g><rect x="316.600" y="431.200" width="14" height=".8" fill="#8ab4e8"/>
<!-- paint -->
<g transform="translate(343.2 424.2) scale(1.28) translate(-343.2 -424.2)"><ellipse cx="343" cy="424.200" rx="3.300" ry="2.700" fill="#e6dcc8"/><circle cx="341.600" cy="423.400" r=".6" fill="#e8452c"/><circle cx="343.300" cy="422.900" r=".6" fill="#2d8cff"/><circle cx="344.600" cy="424" r=".6" fill="#f6c443"/><path d="M340.400,427.200l4.600,-5.600" stroke="#c8823c" stroke-width=".8"/></g><rect x="336.400" y="431.200" width="14" height=".8" fill="#8ab4e8"/>
<!-- tray -->
<g stroke="#f0f0f0" stroke-width=".6" fill="none"><path d="M680.700,424.800l1.800,-1.800l1.800,1.800"/><path d="M690.400,426.200l3.600,-3.800v3.800z" stroke-width=".5"/><path d="M690.300,422.200l2.400,3.600" stroke-width=".4"/>
<path d="M699.400,423.300h1.200l1.500,-1.300v4.400l-1.500,-1.300h-1.200z" fill="#f0f0f0" stroke="none"/><path d="M703.100,422.800q.9,1.300 0,2.800M704.200,422q1.500,2.200 0,4.400" stroke-width=".45"/>
<rect x="752.200" y="420.800" width="5.800" height="4.600" rx=".3" fill="#f4f4f4" stroke="none"/></g>
<circle cx="757.800" cy="426.800" r="2.300" fill="#1c2a3b" stroke="#d0d0d0" stroke-width=".4"/>
<g fill="#f4f4f4" font-family="Liberation Sans, sans-serif"><text x="708.900" y="425.400" font-size="3.900" textLength="8.800" lengthAdjust="spacingAndGlyphs">ESP</text>
<text x="733.800" y="421.900" font-size="4.300" text-anchor="middle">22:32</text><text x="733.800" y="428.900" font-size="4.300" text-anchor="middle">30/9/2020</text>
<text x="757.800" y="428" font-size="3" text-anchor="middle">1</text></g>
</svg>
<!--/TASK-->

<!-- green share border -->
<div class="g" style="left:0;top:0;width:2px;height:416px"></div>
<div class="g" style="left:0;top:0;width:768px;height:1.8px"></div>
<div class="g" style="left:765.7px;top:0;width:2.3px;height:416px"></div>
<!-- zoom share banner -->
<div class="a" style="left:320.8px;top:0;width:110.6px;height:8.5px;background:linear-gradient(#43b30d,#4cc30a 60%);border-bottom-left-radius:2.5px"></div>
<div class="a" style="left:431.3px;top:0;width:27.6px;height:8.5px;background:#d9282f;border-bottom-right-radius:2.5px"></div>
<svg class="a" style="left:320px;top:0" width="140" height="9" viewBox="320 0 140 9"><path d="M324.2,6.2Q324.6,3.6 327.4,2.4Q326.2,4.4 326.4,6.2Z" fill="#0b5a12"/><path d="M424.5,2.2l2,.7v1.6q0,1.7-2,2.4q-2-.7-2-2.4V2.9z" fill="#0d4a12"/><path d="M423.6,4.5l.7,.7l1.2-1.3" stroke="#4cc30a" stroke-width=".45" fill="none"/><rect x="434.3" y="2.9" width="2.9" height="2.9" rx=".4" fill="#fff"/></svg>
<div class="t" style="left:342px;top:2.7px;font-size:4.55px;font-weight:bold;color:#0c3f10">Está compartiendo la pantalla</div>
<div class="t" style="left:440px;top:2.7px;font-size:4.55px;font-weight:bold;color:#fff">Deja de</div>
</body></html>
